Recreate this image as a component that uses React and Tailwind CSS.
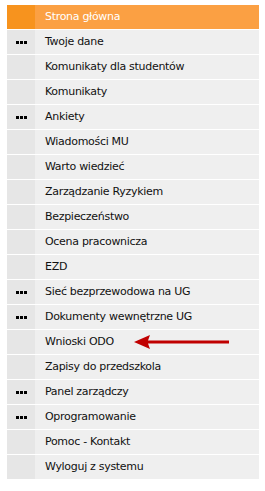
const items = [
  { label: 'Twoje dane', more: true },
  { label: 'Komunikaty dla studentów' },
  { label: 'Komunikaty' },
  { label: 'Ankiety', more: true },
  { label: 'Wiadomości MU' },
  { label: 'Warto wiedzieć' },
  { label: 'Zarządzanie Ryzykiem' },
  { label: 'Bezpieczeństwo' },
  { label: 'Ocena pracownicza' },
  { label: 'EZD' },
  { label: 'Sieć bezprzewodowa na UG', more: true },
  { label: 'Dokumenty wewnętrzne UG', more: true },
  { label: 'Wnioski ODO', arrow: true },
  { label: 'Zapisy do przedszkola' },
  { label: 'Panel zarządczy', more: true },
  { label: 'Oprogramowanie', more: true },
  { label: 'Pomoc - Kontakt' },
  { label: 'Wyloguj z systemu' },
];

function Dots() {
  return (
    <div className="flex gap-px">
      <span className="w-[3px] h-[3px] bg-black" />
      <span className="w-[3px] h-[3px] bg-black" />
      <span className="w-[3px] h-[3px] bg-black" />
    </div>
  );
}

function Arrow() {
  return (
    <svg width="96" height="16" viewBox="0 0 96 16" className="absolute left-[99px] top-[4px]">
      <polygon points="0,8 16,1 14,6.5 95,6.5 95,9.5 14,9.5 16,15" fill="#c00000" />
    </svg>
  );
}

export default function App() {
  return (
    <div className="w-[265px] h-[491px] bg-white pt-[5px] pl-[7px]" style={{ fontFamily: '"DejaVu Sans", Verdana, sans-serif' }}>
      <div className="w-[252px] flex flex-col gap-px text-[11px] tracking-[-0.3px]">
        <div className="flex h-[24px]">
          <div className="w-[28px] bg-[#f7931e]" />
          <div className="flex-1 bg-[#fba043] text-white flex items-center pl-[10px]">Strona główna</div>
        </div>
        {items.map((it) => (
          <div key={it.label} className="flex h-[24px]">
            <div className="w-[28px] bg-[#e6e6e6] flex items-center justify-center">
              {it.more && <Dots />}
            </div>
            <div className="relative flex-1 bg-[#efefef] text-[#111] flex items-center pl-[10px]">
              {it.label}
              {it.arrow && <Arrow />}
            </div>
          </div>
        ))}
      </div>
    </div>
  );
}
